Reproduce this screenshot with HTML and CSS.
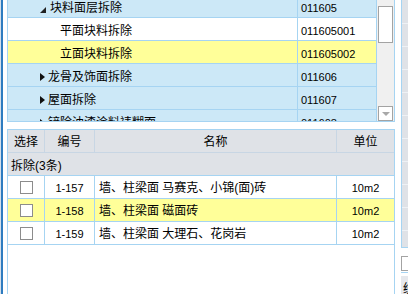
FILE: index.html
```html
<!DOCTYPE html>
<html lang="zh-CN">

<head>
  <meta charset="UTF-8">
  <title>定额拆除</title>
  <link rel="stylesheet" href="styles.css">
</head>

<body>
  <div class="app">
    <div class="edge"></div>

    <div class="main">
      <!-- 章节树 -->
      <div class="tree">
        <div class="tree-body">
          <div class="tree-rows">
            <div class="trow">
              <div class="tname lv-open"><i class="tri-open"></i>块料面层拆除</div>
              <div class="tcode">011605</div>
            </div>
            <div class="trow white">
              <div class="tname lv-leaf">平面块料拆除</div>
              <div class="tcode">011605001</div>
            </div>
            <div class="trow yellow">
              <div class="tname lv-leaf">立面块料拆除</div>
              <div class="tcode">011605002</div>
            </div>
            <div class="trow">
              <div class="tname lv-closed"><i class="tri-closed"></i>龙骨及饰面拆除</div>
              <div class="tcode">011606</div>
            </div>
            <div class="trow">
              <div class="tname lv-closed"><i class="tri-closed"></i>屋面拆除</div>
              <div class="tcode">011607</div>
            </div>
            <div class="trow">
              <div class="tname lv-closed"><i class="tri-closed"></i>铲除油漆涂料裱糊面</div>
              <div class="tcode">011608</div>
            </div>
          </div>
        </div>
        <div class="vscroll">
          <div class="thumb"></div>
          <div class="arrow-down"><i></i></div>
        </div>
      </div>

      <!-- 定额列表 -->
      <div class="grid">
        <div class="grow head">
          <div class="c c1">选择</div>
          <div class="c c2">编号</div>
          <div class="c c3 center">名称</div>
          <div class="c c4">单位</div>
        </div>
        <div class="grow group">拆除(3条)</div>
        <div class="grow">
          <div class="c c1"><span class="chk"></span></div>
          <div class="c c2 num">1-157</div>
          <div class="c c3">墙、柱梁面 马赛克、小锦(面)砖</div>
          <div class="c c4 num">10m2</div>
        </div>
        <div class="grow yellow">
          <div class="c c1"><span class="chk"></span></div>
          <div class="c c2 num">1-158</div>
          <div class="c c3">墙、柱梁面 磁面砖</div>
          <div class="c c4 num">10m2</div>
        </div>
        <div class="grow">
          <div class="c c1"><span class="chk"></span></div>
          <div class="c c2 num">1-159</div>
          <div class="c c3">墙、柱梁面 大理石、花岗岩</div>
          <div class="c c4 num">10m2</div>
        </div>
      </div>
    </div>

    <div class="side">
      <div class="side-grid">
        <div></div><div></div><div></div><div></div><div></div>
        <div></div><div></div><div></div><div></div><div></div>
      </div>
      <div class="side-box"><div class="side-input"></div></div>
      <div class="side-foot">统</div>
    </div>
  </div>
</body>

</html>
```

FILE: styles.css
```css
* {
  margin: 0;
  padding: 0;
  box-sizing: border-box;
}

body {
  font-family: "Liberation Sans", "Noto Sans CJK SC", sans-serif;
  font-size: 12px;
  color: #000;
  background: #fff;
}

.app {
  display: flex;
  width: 408px;
  height: 294px;
  overflow: hidden;
}

.edge {
  width: 7px;
  flex: none;
  border-left: 1px solid #d3dfeb;
  background: linear-gradient(to right, #2e7cc0 0, #2e7cc0 2px, #fff 2px);
}

.main {
  width: 388px;
  flex: none;
  display: flex;
  flex-direction: column;
}

/* 章节树 */
.tree {
  display: flex;
  height: 122px;
  border: 1px solid #a6d4f2;
  border-top: none;
}

.tree-body {
  width: 369px;
  overflow: hidden;
  border-right: 1px solid #a6d4f2;
  background: #cce8f7;
}

.tree-rows {
  margin-top: -5px;
}

.trow {
  display: flex;
  height: 23px;
  border-bottom: 1px solid #a6d4f2;
  background: #cce8f7;
}

.trow.white {
  background: #fff;
}

.trow.yellow {
  background: #ffff99;
}

.tname {
  width: 289px;
  display: flex;
  align-items: center;
  padding-top: 4px;
  line-height: 18px;
}

.lv-open {
  padding-left: 32px;
}

.lv-closed {
  padding-left: 32px;
}

.lv-leaf {
  padding-left: 52px;
}

.tri-open {
  width: 0;
  height: 0;
  border-left: 6px solid transparent;
  border-bottom: 6px solid #222;
  margin: 3px 4px 0 0;
}

.tri-closed {
  width: 0;
  height: 0;
  border-top: 4px solid transparent;
  border-bottom: 4px solid transparent;
  border-left: 5px solid #111;
  margin: 0 3px 0 0;
}

.tcode {
  flex: 1;
  border-left: 1px solid #a6d4f2;
  padding: 4px 0 0 3px;
  line-height: 18px;
  font-size: 11px;
}

.vscroll {
  width: 17px;
  background: #f0f0f0;
  display: flex;
  flex-direction: column;
  justify-content: space-between;
  padding: 6px 0 0 1px;
}

.thumb {
  width: 15px;
  height: 37px;
  background: #fff;
  border: 1px solid #a3a3a3;
}

.arrow-down {
  width: 15px;
  height: 15px;
  background: #fff;
  border: 1px solid #a3a3a3;
  display: flex;
  align-items: center;
  justify-content: center;
}

.arrow-down i {
  width: 0;
  height: 0;
  border-left: 4px solid transparent;
  border-right: 4px solid transparent;
  border-top: 4px solid #a8a8a8;
}

/* 定额列表 */
.grid {
  flex: 1;
  margin-top: 7px;
  border: 1px solid #a6d4f2;
  border-bottom: none;
}

.grow {
  display: flex;
  height: 23px;
  border-bottom: 1px solid #a6d4f2;
}

.grow.yellow {
  background: #ffff99;
}

.grow.head {
  background: #dfe2e7;
  border-bottom-color: #c8d6e4;
}

.grow.head .c {
  border-left-color: #c8d6e4;
}

.grow.group {
  background: #dfe2e7;
  padding: 4px 0 0 3px;
  line-height: 18px;
}

.c {
  display: flex;
  align-items: center;
  justify-content: center;
  padding-top: 3px;
  line-height: 19px;
  border-left: 1px solid #a6d4f2;
}

.c1 {
  width: 36px;
  border-left: none;
}

.c2 {
  width: 50px;
}

.c3 {
  width: 242px;
  justify-content: flex-start;
  padding-left: 4px;
}

.c3.center {
  justify-content: center;
  padding-left: 0;
}

.c4 {
  width: 58px;
}

.num {
  font-size: 11px;
}

.chk {
  width: 13px;
  height: 13px;
  margin-top: -2px;
  border: 1px solid #8c8c8c;
  background: #fff;
}

/* 右侧面板 */
.side {
  width: 7px;
  margin-left: 6px;
  flex: none;
  display: flex;
  flex-direction: column;
}

.side-grid {
  height: 248px;
  padding-top: 1px;
  background: #dfe2e7;
  border-left: 1px solid #a6d4f2;
  border-bottom: 1px solid #a6d4f2;
}

.side-grid div {
  height: 23px;
  border-bottom: 1px solid #eef1f5;
}

.side-box {
  height: 25px;
  padding-top: 8px;
  border-bottom: 1px solid #a6d4f2;
}

.side-input {
  height: 15px;
  border: 1px solid #a3a3a3;
  border-right: none;
}

.side-foot {
  margin-top: 3px;
  flex: 1;
  background: #e6e8ec;
  padding: 3px 0 0 2px;
  font-size: 12px;
  white-space: nowrap;
  overflow: hidden;
}
```
